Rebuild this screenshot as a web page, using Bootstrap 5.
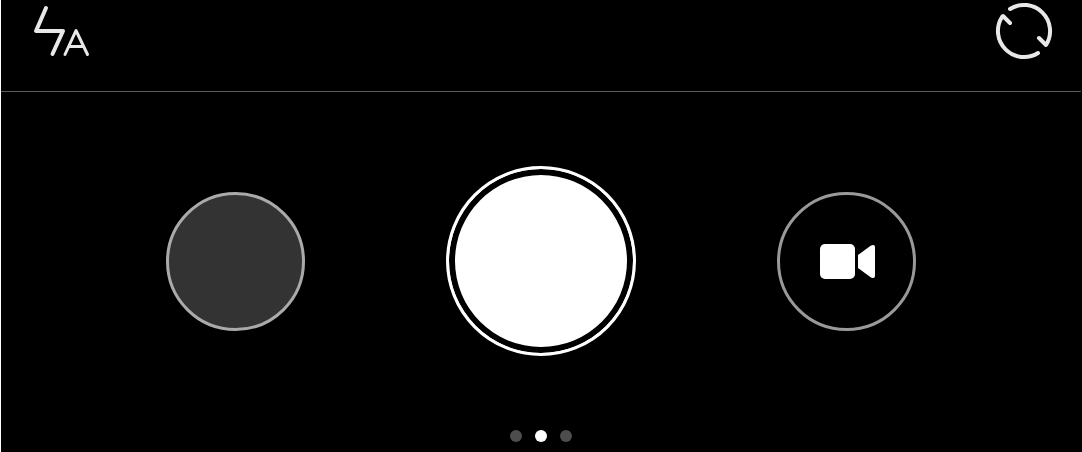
<!DOCTYPE html>
<html lang="en">
<head>
<meta charset="utf-8">
<meta name="viewport" content="width=device-width, initial-scale=1">
<title>Camera</title>
<link href="https://cdn.jsdelivr.net/npm/bootstrap@5.3.0/dist/css/bootstrap.min.css" rel="stylesheet">
<style>
body{background:#000;font-family:"Liberation Sans",sans-serif}
.camera{border-left:1px solid #fff;border-right:1px solid #000}
.camera-top{height:92px;padding:0 28px 0 32px;border-bottom:1px solid #5a5a5a}
.camera-top .btn{color:#e8e8e8}
.camera .btn{border-radius:50%;padding:0}
.controls{padding:74px 165px 0}
.round{width:139px;height:139px;border:3px solid #999}
.gallery,.gallery:hover{background:#333;border-color:#aaa}
.video:hover{border-color:#999}
.shutter,.shutter:hover{width:190px;height:190px;border:3px solid #fff;padding:0;background:#fff;box-shadow:inset 0 0 0 6px #000}
.pager{gap:13px;padding:10px 0}
.pager .btn,.pager .btn:hover{width:12px;height:12px;border:0;background:#4d4d4d}
.pager .active,.pager .active:hover{background:#fff}
</style>
</head>
<body>
<main class="camera min-vh-100 d-flex flex-column">
  <header class="camera-top d-flex justify-content-between align-items-start">
    <button type="button" class="btn border-0 lh-1" aria-label="Automatic flash">
      <svg class="d-block" width="60" height="62" fill="none" stroke="currentColor" stroke-linecap="round" stroke-linejoin="round"><path d="M13 8 3 31H30L19.500 54" stroke-width="4"/><path d="M32 54.500 43 30.500 54.500 54.500M36 46.500H50" stroke-width="3"/></svg>
    </button>
    <button type="button" class="btn border-0 lh-1" aria-label="Switch camera">
      <svg class="d-block" width="60" height="62" fill="none" stroke="currentColor" stroke-width="4" stroke-linecap="round" stroke-linejoin="round"><path d="M17 9A26.080 26.080 0 0 1 53 45L46 38M45 53A26.080 26.080 0 0 1 9 17L10 16L17 23"/></svg>
    </button>
  </header>
  <section class="controls d-flex justify-content-between align-items-center" aria-label="Capture controls">
    <button type="button" class="btn round gallery" aria-label="Open gallery"></button>
    <button type="button" class="btn shutter" aria-label="Take photo"></button>
    <button type="button" class="btn round video d-flex align-items-center justify-content-center" aria-label="Record video">
      <svg width="57" height="35" viewBox="-2 0 57 35" fill="#fff"><rect width="35" height="35" rx="5"/><path d="M38 11 51 1.500Q55 0 55 3V32Q55 35 51 33.500L38 24Z"/></svg>
    </button>
  </section>
  <nav class="pager d-flex justify-content-center mt-auto" aria-label="Camera modes">
    <button type="button" class="btn" aria-label="Mode 1"></button>
    <button type="button" class="btn active" aria-label="Mode 2" aria-current="true"></button>
    <button type="button" class="btn" aria-label="Mode 3"></button>
  </nav>
</main>
<script src="https://cdn.jsdelivr.net/npm/bootstrap@5.3.0/dist/js/bootstrap.bundle.min.js"></script>
</body>
</html>
